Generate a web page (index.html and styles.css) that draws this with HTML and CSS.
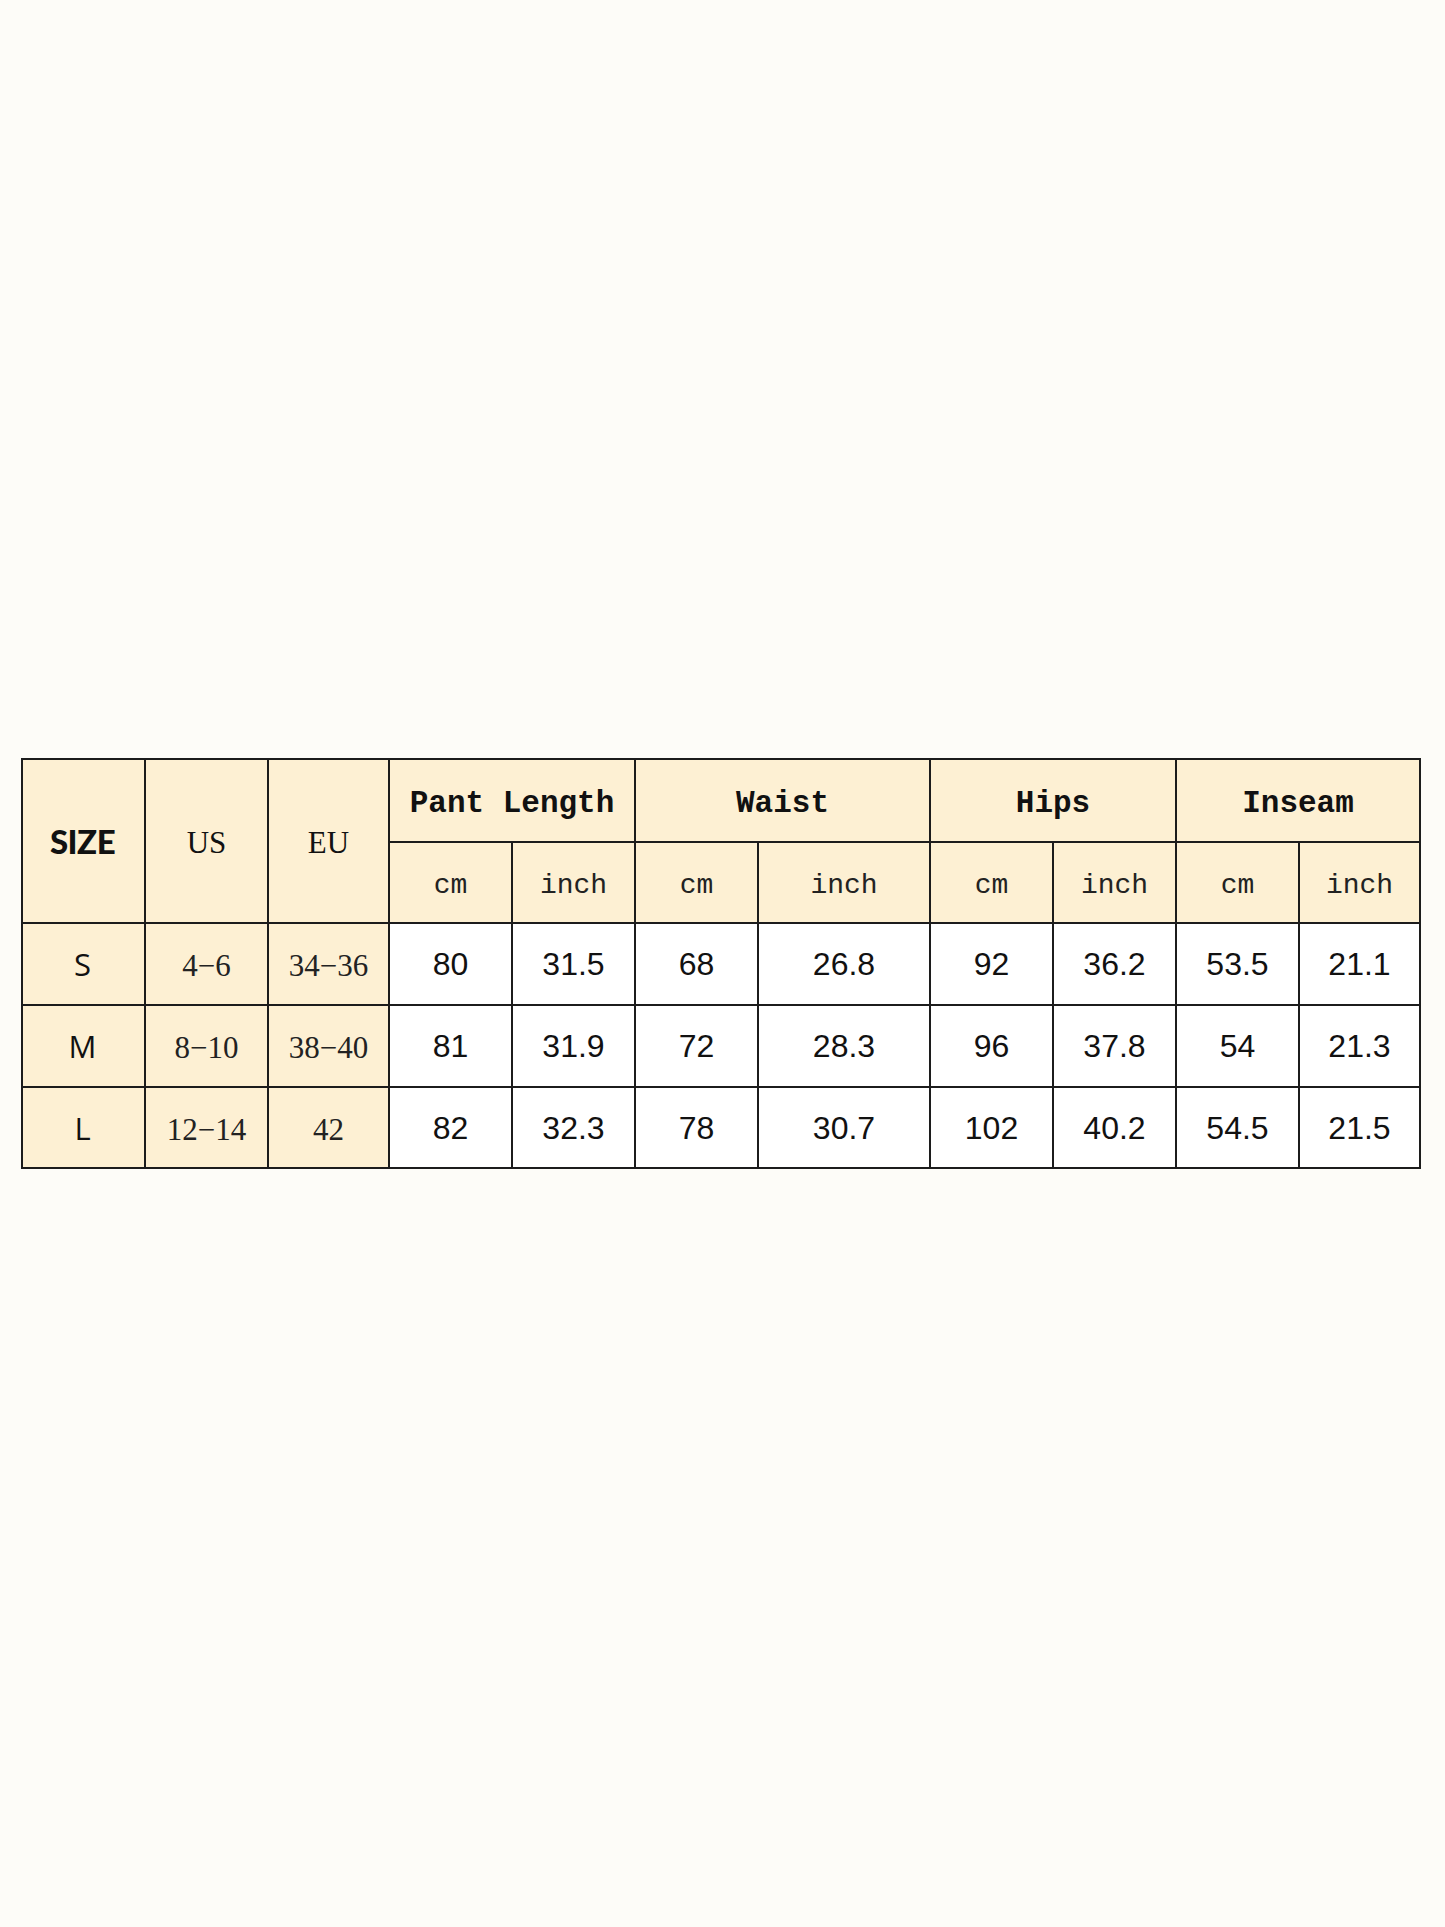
FILE: index.html
```html
<!DOCTYPE html>
<html lang="en">
<head>
<meta charset="utf-8">
<title>Size Chart</title>
<link rel="stylesheet" href="styles.css">
</head>
<body>
<div class="chart" role="table">
  <div class="c hd size span-r" role="columnheader">SIZE</div>
  <div class="c hd serif span-r" role="columnheader">US</div>
  <div class="c hd serif span-r" role="columnheader">EU</div>
  <div class="c hd mono-b span-c" role="columnheader">Pant Length</div>
  <div class="c hd mono-b span-c" role="columnheader">Waist</div>
  <div class="c hd mono-b span-c" role="columnheader">Hips</div>
  <div class="c hd mono-b span-c" role="columnheader">Inseam</div>
  <div class="c hd mono">cm</div>
  <div class="c hd mono">inch</div>
  <div class="c hd mono">cm</div>
  <div class="c hd mono">inch</div>
  <div class="c hd mono">cm</div>
  <div class="c hd mono">inch</div>
  <div class="c hd mono">cm</div>
  <div class="c hd mono">inch</div>

  <div class="c hd letter">S</div>
  <div class="c hd serif-n">4−6</div>
  <div class="c hd serif-n">34−36</div>
  <div class="c val">80</div><div class="c val">31.5</div>
  <div class="c val">68</div><div class="c val">26.8</div>
  <div class="c val">92</div><div class="c val">36.2</div>
  <div class="c val">53.5</div><div class="c val">21.1</div>

  <div class="c hd letter">M</div>
  <div class="c hd serif-n">8−10</div>
  <div class="c hd serif-n">38−40</div>
  <div class="c val">81</div><div class="c val">31.9</div>
  <div class="c val">72</div><div class="c val">28.3</div>
  <div class="c val">96</div><div class="c val">37.8</div>
  <div class="c val">54</div><div class="c val">21.3</div>

  <div class="c hd letter">L</div>
  <div class="c hd serif-n">12−14</div>
  <div class="c hd serif-n">42</div>
  <div class="c val">82</div><div class="c val">32.3</div>
  <div class="c val">78</div><div class="c val">30.7</div>
  <div class="c val">102</div><div class="c val">40.2</div>
  <div class="c val">54.5</div><div class="c val">21.5</div>
</div>
</body>
</html>
```
FILE: styles.css
```css
html, body {
  margin: 0;
  padding: 0;
}
body {
  background: #fdfcf8;
  min-height: 1927px;
  padding-top: 758px;
  padding-left: 21px;
  box-sizing: border-box;
}
.chart {
  display: grid;
  grid-template-columns: 121px 121px 119px 121px 121px 121px 170px 121px 121px 121px 119px;
  grid-template-rows: 81px 79px 80px 80px 79px;
  gap: 2px;
  padding: 2px;
  background: #1c1c1c;
  width: max-content;
}
.c {
  display: flex;
  align-items: center;
  justify-content: center;
  background: #ffffff;
  color: #111;
}
.hd {
  background: #fdf0d3;
}
.span-r {
  grid-row: span 2;
}
.span-c {
  grid-column: span 2;
}
.size {
  font-family: Lato, "Open Sans", sans-serif;
  font-weight: 900;
  font-size: 33px;
  letter-spacing: -0.5px;
  padding-right: 2px;
}
.serif {
  font-family: "Liberation Serif", serif;
  font-size: 31px;
  padding-top: 4px;
}
.serif-n {
  font-family: "Liberation Serif", serif;
  font-size: 31px;
  color: #222;
  padding-top: 4px;
}
.mono-b {
  font-family: "Liberation Mono", monospace;
  font-weight: bold;
  font-size: 31px;
  padding-top: 6px;
}
.mono {
  font-family: "Liberation Mono", monospace;
  font-size: 28px;
  color: #222;
  padding-top: 6px;
}
.letter {
  font-family: "Open Sans", sans-serif;
  font-size: 31px;
  padding-right: 2px;
}
.val {
  font-family: "Liberation Sans", Arial, sans-serif;
  font-size: 32px;
  padding-top: 1px;
}
```
